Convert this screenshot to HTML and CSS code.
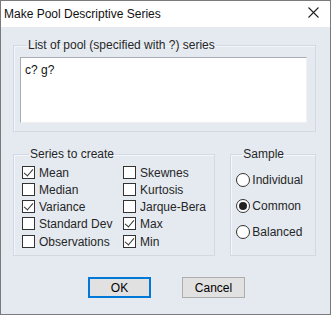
FILE: index.html
```html
<!DOCTYPE html>
<html lang="en">
<head>
	<meta charset="UTF-8">
	<title>Make Pool Descriptive Series</title>
	<link rel="stylesheet" href="styles.css">
</head>
<body>
<div class="window">
	<div class="titlebar">
		<span class="title">Make Pool Descriptive Series</span>
		<svg class="close" width="11" height="11" viewBox="0 0 11 11">
			<path d="M0.5 0.5L10.5 10.5M10.5 0.5L0.5 10.5" stroke="#222" stroke-width="1.1" fill="none"/>
		</svg>
	</div>
	<div class="dialog">
		<fieldset class="group list">
			<legend>List of pool (specified with ?) series</legend>
			<div class="textbox">c? g?</div>
		</fieldset>

		<div class="row">
			<fieldset class="group series">
				<legend>Series to create</legend>
				<div class="checks">
					<label class="check on"><span class="box"></span>Mean</label>
					<label class="check"><span class="box"></span>Skewnes</label>
					<label class="check"><span class="box"></span>Median</label>
					<label class="check"><span class="box"></span>Kurtosis</label>
					<label class="check on"><span class="box"></span>Variance</label>
					<label class="check"><span class="box"></span>Jarque-Bera</label>
					<label class="check"><span class="box"></span>Standard Dev</label>
					<label class="check on"><span class="box"></span>Max</label>
					<label class="check last"><span class="box"></span>Observations</label>
					<label class="check on last"><span class="box"></span>Min</label>
				</div>
			</fieldset>

			<fieldset class="group sample">
				<legend>Sample</legend>
				<label class="radio"><span class="dot"></span>Individual</label>
				<label class="radio on"><span class="dot"></span>Common</label>
				<label class="radio"><span class="dot"></span>Balanced</label>
			</fieldset>
		</div>

		<div class="buttons">
			<div class="btn default">OK</div>
			<div class="btn">Cancel</div>
		</div>
	</div>
</div>
</body>
</html>
```
FILE: styles.css
```css
html,body{
	margin: 0;
	padding: 0;
	background-color: #fff;
	font-family: "Liberation Sans", Arial, sans-serif;
	font-size: 12px;
	color: #262626;
}
.window{
	width: 331px;
	height: 315px;
	box-sizing: border-box;
	border: 1px solid #7a7a7a;
	background-color: #e5eaf1;
	display: flex;
	flex-direction: column;
}
.titlebar{
	height: 26px;
	background-color: #fff;
	display: flex;
	align-items: center;
	justify-content: space-between;
	padding: 0 11px 0 3px;
}
.title{
	font-size: 12px;
	color: #111;
	margin-top: -1px;
}
.close{
	margin-top: -3px;
}
.dialog{
	padding: 11px 14px 0 12px;
}
.group{
	margin: 0;
	border: 1px solid #d2d9e2;
	box-shadow: inset 1px 1px 0 #f3f6fa;
}
.group legend{
	padding: 0 1px;
	margin-left: 7px;
	line-height: 14px;
}
.list{
	padding: 5px 8px 8px 6px;
}
.textbox{
	height: 66px;
	box-sizing: border-box;
	background-color: #fff;
	border-top: 1px solid #a8adb4;
	border-left: 1px solid #a8adb4;
	border-right: 1px solid #f0f0f0;
	border-bottom: 1px solid #f0f0f0;
	padding: 5px 4px;
	line-height: 14px;
	color: #111;
}
.row{
	display: flex;
	gap: 15px;
	margin-top: 15px;
}
.series{
	width: 203px;
	box-sizing: border-box;
	padding: 3px 0 3px 8px;
}
.checks{
	display: grid;
	grid-template-columns: 101px 1fr;
	grid-auto-rows: 17px;
}
.check{
	display: flex;
	align-items: center;
	gap: 4px;
}
.check.last{
	margin-top: 2px;
}
.box{
	width: 13px;
	height: 13px;
	box-sizing: border-box;
	border: 1px solid #333;
	background-color: #fff;
	position: relative;
}
.check.on .box::after{
	content: "";
	position: absolute;
	left: 3px;
	top: 0px;
	width: 4px;
	height: 8px;
	border-right: 1px solid #333;
	border-bottom: 1px solid #333;
	transform: rotate(40deg);
}
.sample{
	width: 86px;
	box-sizing: border-box;
	padding: 6px 0 10px 5px;
	display: flex;
	flex-direction: column;
}
.sample legend{
	margin-left: 6px;
}
.radio{
	height: 26px;
	display: flex;
	align-items: center;
	gap: 2px;
}
.dot{
	width: 14px;
	height: 14px;
	box-sizing: border-box;
	border: 1px solid #333;
	border-radius: 50%;
	background-color: #fff;
	display: flex;
	align-items: center;
	justify-content: center;
}
.radio.on .dot::after{
	content: "";
	width: 8px;
	height: 8px;
	border-radius: 50%;
	background-color: #222;
}
.buttons{
	display: flex;
	justify-content: center;
	gap: 31px;
	margin-top: 21px;
	padding-left: 4px;
}
.btn{
	width: 63px;
	height: 21px;
	box-sizing: border-box;
	border: 1px solid #adadad;
	background-color: #e1e1e1;
	display: flex;
	align-items: center;
	justify-content: center;
	color: #000;
}
.btn.default{
	border: 2px solid #0078d7;
}
```
